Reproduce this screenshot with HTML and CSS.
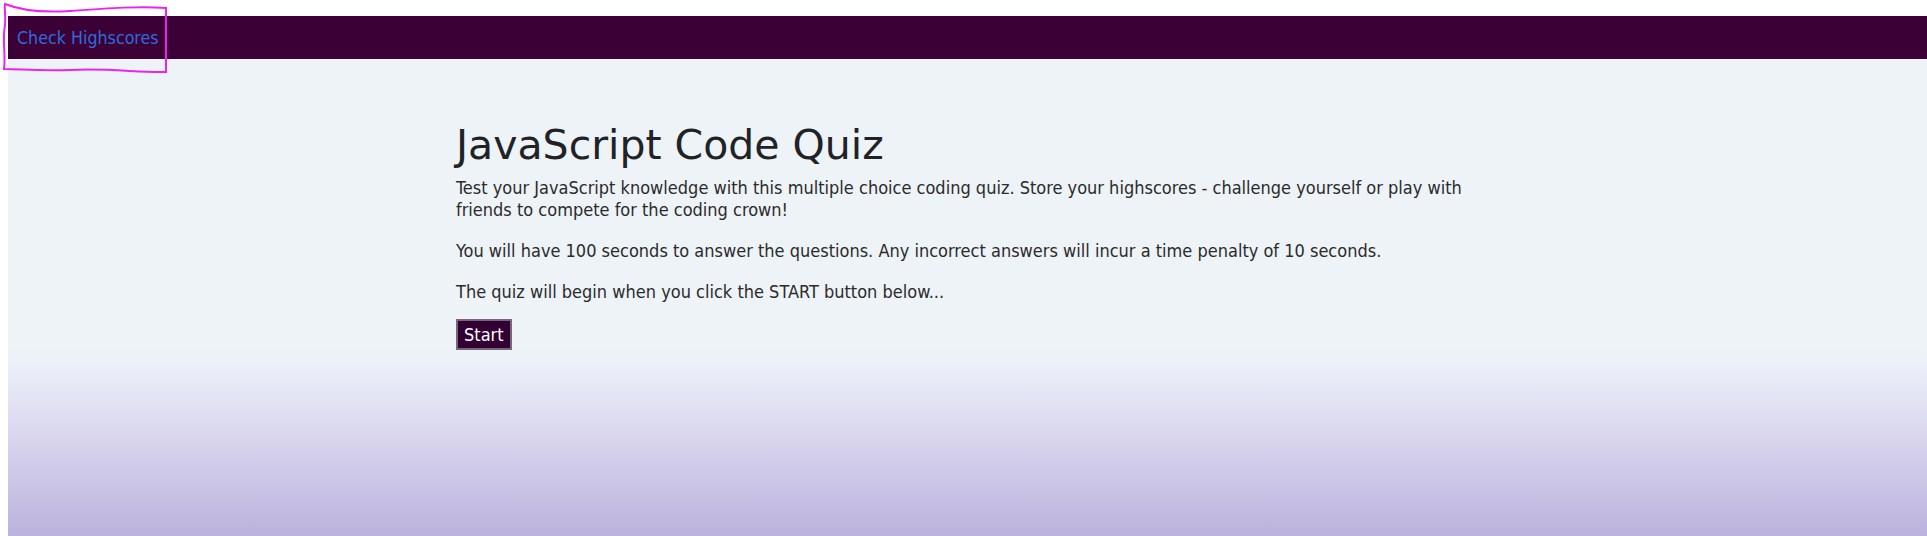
FILE: index.html
```html
<!DOCTYPE html>
<html lang="en">
<head>
<meta charset="utf-8">
<title>JavaScript Code Quiz</title>
<link rel="stylesheet" href="styles.css">
</head>
<body>
<div class="page">
  <header class="nav">
    <a class="nav-link" href="#">Check Highscores</a>
  </header>
  <main class="quiz">
    <h1 class="title">JavaScript Code Quiz</h1>
    <p class="text">Test your JavaScript knowledge with this multiple choice coding quiz. Store your highscores - challenge yourself or play with friends to compete for the coding crown!</p>
    <p class="text">You will have 100 seconds to answer the questions. Any incorrect answers will incur a time penalty of 10 seconds.</p>
    <p class="text">The quiz will begin when you click the START button below...</p>
    <button class="start">Start</button>
  </main>
</div>
<svg class="mark" width="175" height="80" viewBox="0 0 175 80">
  <path d="M5 4 C 20 10, 40 13, 70 11 C 110 8, 140 6, 166 8 L 166 40 L 166 72 C 140 73, 110 68, 70 70 C 40 71, 20 69, 4 69 C 6 55, 2 40, 5 25 C 6 15, 4 8, 5 4 Z" fill="none" stroke="#ee22ee" stroke-width="2"/>
</svg>
</body>
</html>
```
FILE: styles.css
```css
html, body {
  margin: 0;
  padding: 0;
  height: 100%;
  background: #ffffff;
}

body {
  padding: 16px 0 0 8px;
  box-sizing: border-box;
  font-family: "DejaVu Sans", Verdana, sans-serif;
  font-stretch: condensed;
  color: #222222;
  overflow: hidden;
}

.page {
  min-height: 100%;
  width: 1919px;
  background: linear-gradient(to bottom, #edf3f7 0px, #edf3f7 325px, #edf1fa 345px, #d6d2ec 430px, #bbb2dd 520px);
}

.nav {
  height: 43px;
  background: #3b0137;
  display: flex;
  align-items: center;
  padding-left: 9px;
}

.nav-link {
  color: #2e6bdc;
  text-decoration: none;
  font-size: 17.7px;
}

.quiz {
  width: 1023px;
  margin: 0 auto;
  padding-top: 63px;
}

.title {
  font-size: 41px;
  font-stretch: normal;
  font-weight: normal;
  margin: 0 0 8px;
  color: #1f2326;
  line-height: 1.15;
}

.text {
  font-size: 18px;
  line-height: 22px;
  margin: 0 0 19px;
  color: #2b2b2b;
}

.start {
  font-family: inherit;
  font-stretch: condensed;
  font-size: 18px;
  line-height: 21px;
  color: #ffffff;
  background: #330033;
  border: 2px solid #76687a;
  padding: 3px 6px 3px;
  margin-top: -3px;
}

.mark {
  position: absolute;
  left: 0;
  top: 0;
}
```
